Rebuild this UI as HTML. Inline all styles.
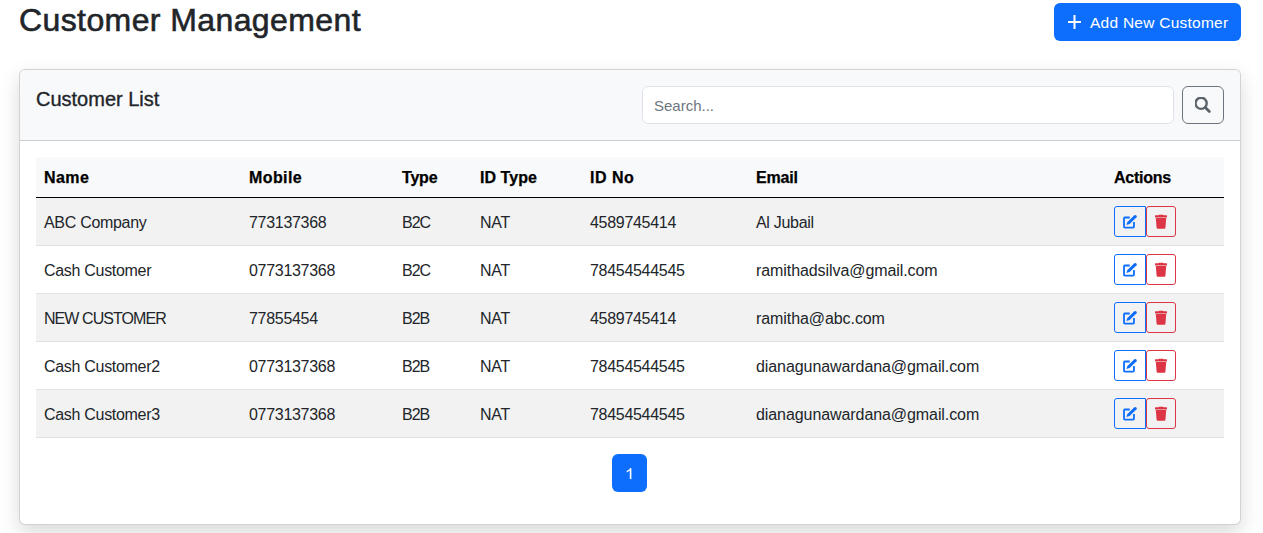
<!DOCTYPE html>
<html>
<head>
<meta charset="utf-8">
<style>
*{box-sizing:border-box;margin:0;padding:0}
html,body{width:1263px;height:533px;overflow:hidden;background:#fff}
body{font-family:"Liberation Sans",sans-serif;color:#212529;position:relative;font-size:16px;line-height:24px}
.abs{position:absolute}
h2{position:absolute;left:19px;top:0px;font-size:32px;font-weight:400;line-height:40px;color:#212529;white-space:nowrap;letter-spacing:0.4px;-webkit-text-stroke:0.6px #212529}
.addbtn{position:absolute;left:1054px;top:3px;width:187px;height:38px;background:#0d6efd;border-radius:6px;color:#fff;font-size:16px;line-height:38px;white-space:nowrap}
.addbtn .plus{position:absolute;left:14px;top:12px;width:13px;height:14px}
.addbtn .txt{position:absolute;left:36px;top:1px;font-size:15.5px;letter-spacing:0.25px}
.card{position:absolute;left:19px;top:69px;width:1222px;height:456px;border:1px solid rgba(0,0,0,.175);border-radius:6px;box-shadow:0 8px 20px rgba(0,0,0,.15);background:#fff;overflow:hidden}
.chead{position:absolute;left:0;top:0;width:1220px;height:71px;background:#f8f9fa;border-bottom:1px solid rgba(0,0,0,.175)}
.ctitle{position:absolute;left:16px;top:17px;font-size:20px;line-height:24px;font-weight:400;white-space:nowrap;-webkit-text-stroke:0.35px #212529}
.search{position:absolute;left:622px;top:16px;width:532px;height:38px;background:#fff;border:1px solid #dee2e6;border-radius:6px}
.search span{position:absolute;left:11px;top:7px;color:#6c757d;font-size:15px;line-height:24px}
.sbtn{position:absolute;left:1162px;top:16px;width:42px;height:38px;border:1px solid #6c757d;border-radius:6px}
table{position:absolute;left:16px;top:87px;width:1188px;border-collapse:collapse}
th,td{padding:0 8px;text-align:left;white-space:nowrap}
thead tr{height:40px;background:#f8f9fa}
thead th{font-weight:700;color:#000;border-bottom:1px solid #000;padding-top:3px;font-size:16px;-webkit-text-stroke:0.25px #000}
tbody tr{height:48px;border-bottom:1px solid #dee2e6}
td{font-size:16px;padding-top:4px;letter-spacing:-0.3px}
td .act{margin-top:-4px}
td.em{letter-spacing:-0.08px}
td.bt{letter-spacing:-1px}
tbody tr:nth-child(odd){background:#f2f2f2}
.act{position:relative;height:31px}
.eb,.db{position:absolute;top:0;height:31px;border:1px solid #0d6efd}
.eb{left:0;width:32px;border-radius:3px 0 0 3px}
.db{left:32px;width:30px;border-color:#dc3545;border-radius:3px}
.eb svg{position:absolute;left:6px;top:6px}
.db svg{position:absolute;left:7px;top:7px}
.page1{position:absolute;left:592px;top:384px;width:35px;height:38px;background:#0d6efd;border-radius:6px;color:#fff;text-align:center;line-height:40px;font-size:16px}
</style>
</head>
<body>
<h2>Customer Management</h2>
<div class="addbtn">
  <svg class="plus" viewBox="0 0 13 14"><rect x="5.5" y="0" width="2" height="14" fill="#fff"/><rect x="0" y="6" width="13" height="2" fill="#fff"/></svg>
  <span class="txt">Add New Customer</span>
</div>
<div class="card">
  <div class="chead">
    <div class="ctitle">Customer List</div>
    <div class="search"><span>Search...</span></div>
    <div class="sbtn"><svg style="position:absolute;left:12px;top:10px" width="16" height="16" viewBox="0 0 16 16"><circle cx="6.1" cy="6.3" r="5.6" fill="none" stroke="#5c646b" stroke-width="2.4"/><line x1="10.3" y1="10.5" x2="14.3" y2="14.5" stroke="#5c646b" stroke-width="2.8" stroke-linecap="round"/></svg></div>
  </div>
  <table>
    <colgroup><col style="width:205px"><col style="width:153px"><col style="width:78px"><col style="width:110px"><col style="width:166px"><col style="width:358px"><col style="width:118px"></colgroup>
    <thead><tr><th style="letter-spacing:0.42px">Name</th><th style="letter-spacing:0.4px">Mobile</th><th style="letter-spacing:-0.2px">Type</th><th style="letter-spacing:0.05px">ID Type</th><th style="letter-spacing:0.5px">ID No</th><th style="letter-spacing:-0.2px">Email</th><th style="letter-spacing:-0.25px">Actions</th></tr></thead>
    <tbody>
      <tr><td>ABC Company</td><td>773137368</td><td class="bt">B2C</td><td>NAT</td><td>4589745414</td><td>Al Jubail</td><td><div class="act"><div class="eb"><svg width="16" height="16" viewBox="0 0 16 16"><path d="M8.8 4.5H3.9Q3.0 4.5 3.0 5.4V13.7Q3.0 14.6 3.9 14.6H12.0Q12.95 14.6 12.95 13.7V8.9" fill="none" stroke="#0d6efd" stroke-width="1.8"/><path d="M5.3 12.0L6.4 8.9L13.1 2.4L15.3 4.6L8.6 11.0Z" fill="#0d6efd"/><circle cx="14.2" cy="3.5" r="1.6" fill="#0d6efd"/></svg></div><div class="db"><svg width="16" height="16" viewBox="0 0 16 16"><rect x="1" y="1.3" width="12" height="2.1" rx="0.5" fill="#dc3545"/><rect x="4.4" y="0.7" width="5.2" height="1.6" rx="0.7" fill="#dc3545"/><path d="M1.8 3.9H12.2L11.4 13.7Q11.3 14.7 10.3 14.7H3.7Q2.7 14.7 2.6 13.7Z" fill="#dc3545"/></svg></div></div></td></tr>
      <tr><td>Cash Customer</td><td>0773137368</td><td class="bt">B2C</td><td>NAT</td><td>78454544545</td><td class="em">ramithadsilva@gmail.com</td><td><div class="act"><div class="eb"><svg width="16" height="16" viewBox="0 0 16 16"><path d="M8.8 4.5H3.9Q3.0 4.5 3.0 5.4V13.7Q3.0 14.6 3.9 14.6H12.0Q12.95 14.6 12.95 13.7V8.9" fill="none" stroke="#0d6efd" stroke-width="1.8"/><path d="M5.3 12.0L6.4 8.9L13.1 2.4L15.3 4.6L8.6 11.0Z" fill="#0d6efd"/><circle cx="14.2" cy="3.5" r="1.6" fill="#0d6efd"/></svg></div><div class="db"><svg width="16" height="16" viewBox="0 0 16 16"><rect x="1" y="1.3" width="12" height="2.1" rx="0.5" fill="#dc3545"/><rect x="4.4" y="0.7" width="5.2" height="1.6" rx="0.7" fill="#dc3545"/><path d="M1.8 3.9H12.2L11.4 13.7Q11.3 14.7 10.3 14.7H3.7Q2.7 14.7 2.6 13.7Z" fill="#dc3545"/></svg></div></div></td></tr>
      <tr><td style="letter-spacing:-0.94px">NEW CUSTOMER</td><td>77855454</td><td class="bt">B2B</td><td>NAT</td><td>4589745414</td><td class="em">ramitha@abc.com</td><td><div class="act"><div class="eb"><svg width="16" height="16" viewBox="0 0 16 16"><path d="M8.8 4.5H3.9Q3.0 4.5 3.0 5.4V13.7Q3.0 14.6 3.9 14.6H12.0Q12.95 14.6 12.95 13.7V8.9" fill="none" stroke="#0d6efd" stroke-width="1.8"/><path d="M5.3 12.0L6.4 8.9L13.1 2.4L15.3 4.6L8.6 11.0Z" fill="#0d6efd"/><circle cx="14.2" cy="3.5" r="1.6" fill="#0d6efd"/></svg></div><div class="db"><svg width="16" height="16" viewBox="0 0 16 16"><rect x="1" y="1.3" width="12" height="2.1" rx="0.5" fill="#dc3545"/><rect x="4.4" y="0.7" width="5.2" height="1.6" rx="0.7" fill="#dc3545"/><path d="M1.8 3.9H12.2L11.4 13.7Q11.3 14.7 10.3 14.7H3.7Q2.7 14.7 2.6 13.7Z" fill="#dc3545"/></svg></div></div></td></tr>
      <tr><td>Cash Customer2</td><td>0773137368</td><td class="bt">B2B</td><td>NAT</td><td>78454544545</td><td class="em">dianagunawardana@gmail.com</td><td><div class="act"><div class="eb"><svg width="16" height="16" viewBox="0 0 16 16"><path d="M8.8 4.5H3.9Q3.0 4.5 3.0 5.4V13.7Q3.0 14.6 3.9 14.6H12.0Q12.95 14.6 12.95 13.7V8.9" fill="none" stroke="#0d6efd" stroke-width="1.8"/><path d="M5.3 12.0L6.4 8.9L13.1 2.4L15.3 4.6L8.6 11.0Z" fill="#0d6efd"/><circle cx="14.2" cy="3.5" r="1.6" fill="#0d6efd"/></svg></div><div class="db"><svg width="16" height="16" viewBox="0 0 16 16"><rect x="1" y="1.3" width="12" height="2.1" rx="0.5" fill="#dc3545"/><rect x="4.4" y="0.7" width="5.2" height="1.6" rx="0.7" fill="#dc3545"/><path d="M1.8 3.9H12.2L11.4 13.7Q11.3 14.7 10.3 14.7H3.7Q2.7 14.7 2.6 13.7Z" fill="#dc3545"/></svg></div></div></td></tr>
      <tr><td>Cash Customer3</td><td>0773137368</td><td class="bt">B2B</td><td>NAT</td><td>78454544545</td><td class="em">dianagunawardana@gmail.com</td><td><div class="act"><div class="eb"><svg width="16" height="16" viewBox="0 0 16 16"><path d="M8.8 4.5H3.9Q3.0 4.5 3.0 5.4V13.7Q3.0 14.6 3.9 14.6H12.0Q12.95 14.6 12.95 13.7V8.9" fill="none" stroke="#0d6efd" stroke-width="1.8"/><path d="M5.3 12.0L6.4 8.9L13.1 2.4L15.3 4.6L8.6 11.0Z" fill="#0d6efd"/><circle cx="14.2" cy="3.5" r="1.6" fill="#0d6efd"/></svg></div><div class="db"><svg width="16" height="16" viewBox="0 0 16 16"><rect x="1" y="1.3" width="12" height="2.1" rx="0.5" fill="#dc3545"/><rect x="4.4" y="0.7" width="5.2" height="1.6" rx="0.7" fill="#dc3545"/><path d="M1.8 3.9H12.2L11.4 13.7Q11.3 14.7 10.3 14.7H3.7Q2.7 14.7 2.6 13.7Z" fill="#dc3545"/></svg></div></div></td></tr>
    </tbody>
  </table>
  <div class="page1"><svg style="position:absolute;left:0;top:0" width="35" height="38" viewBox="0 0 35 38"><rect x="17.8" y="14.2" width="1.6" height="10.9" fill="#fff"/><path d="M19.0 14.2L14.7 17.0L14.7 18.5L19.0 15.9Z" fill="#fff"/></svg></div>
</div>
</body>
</html>
